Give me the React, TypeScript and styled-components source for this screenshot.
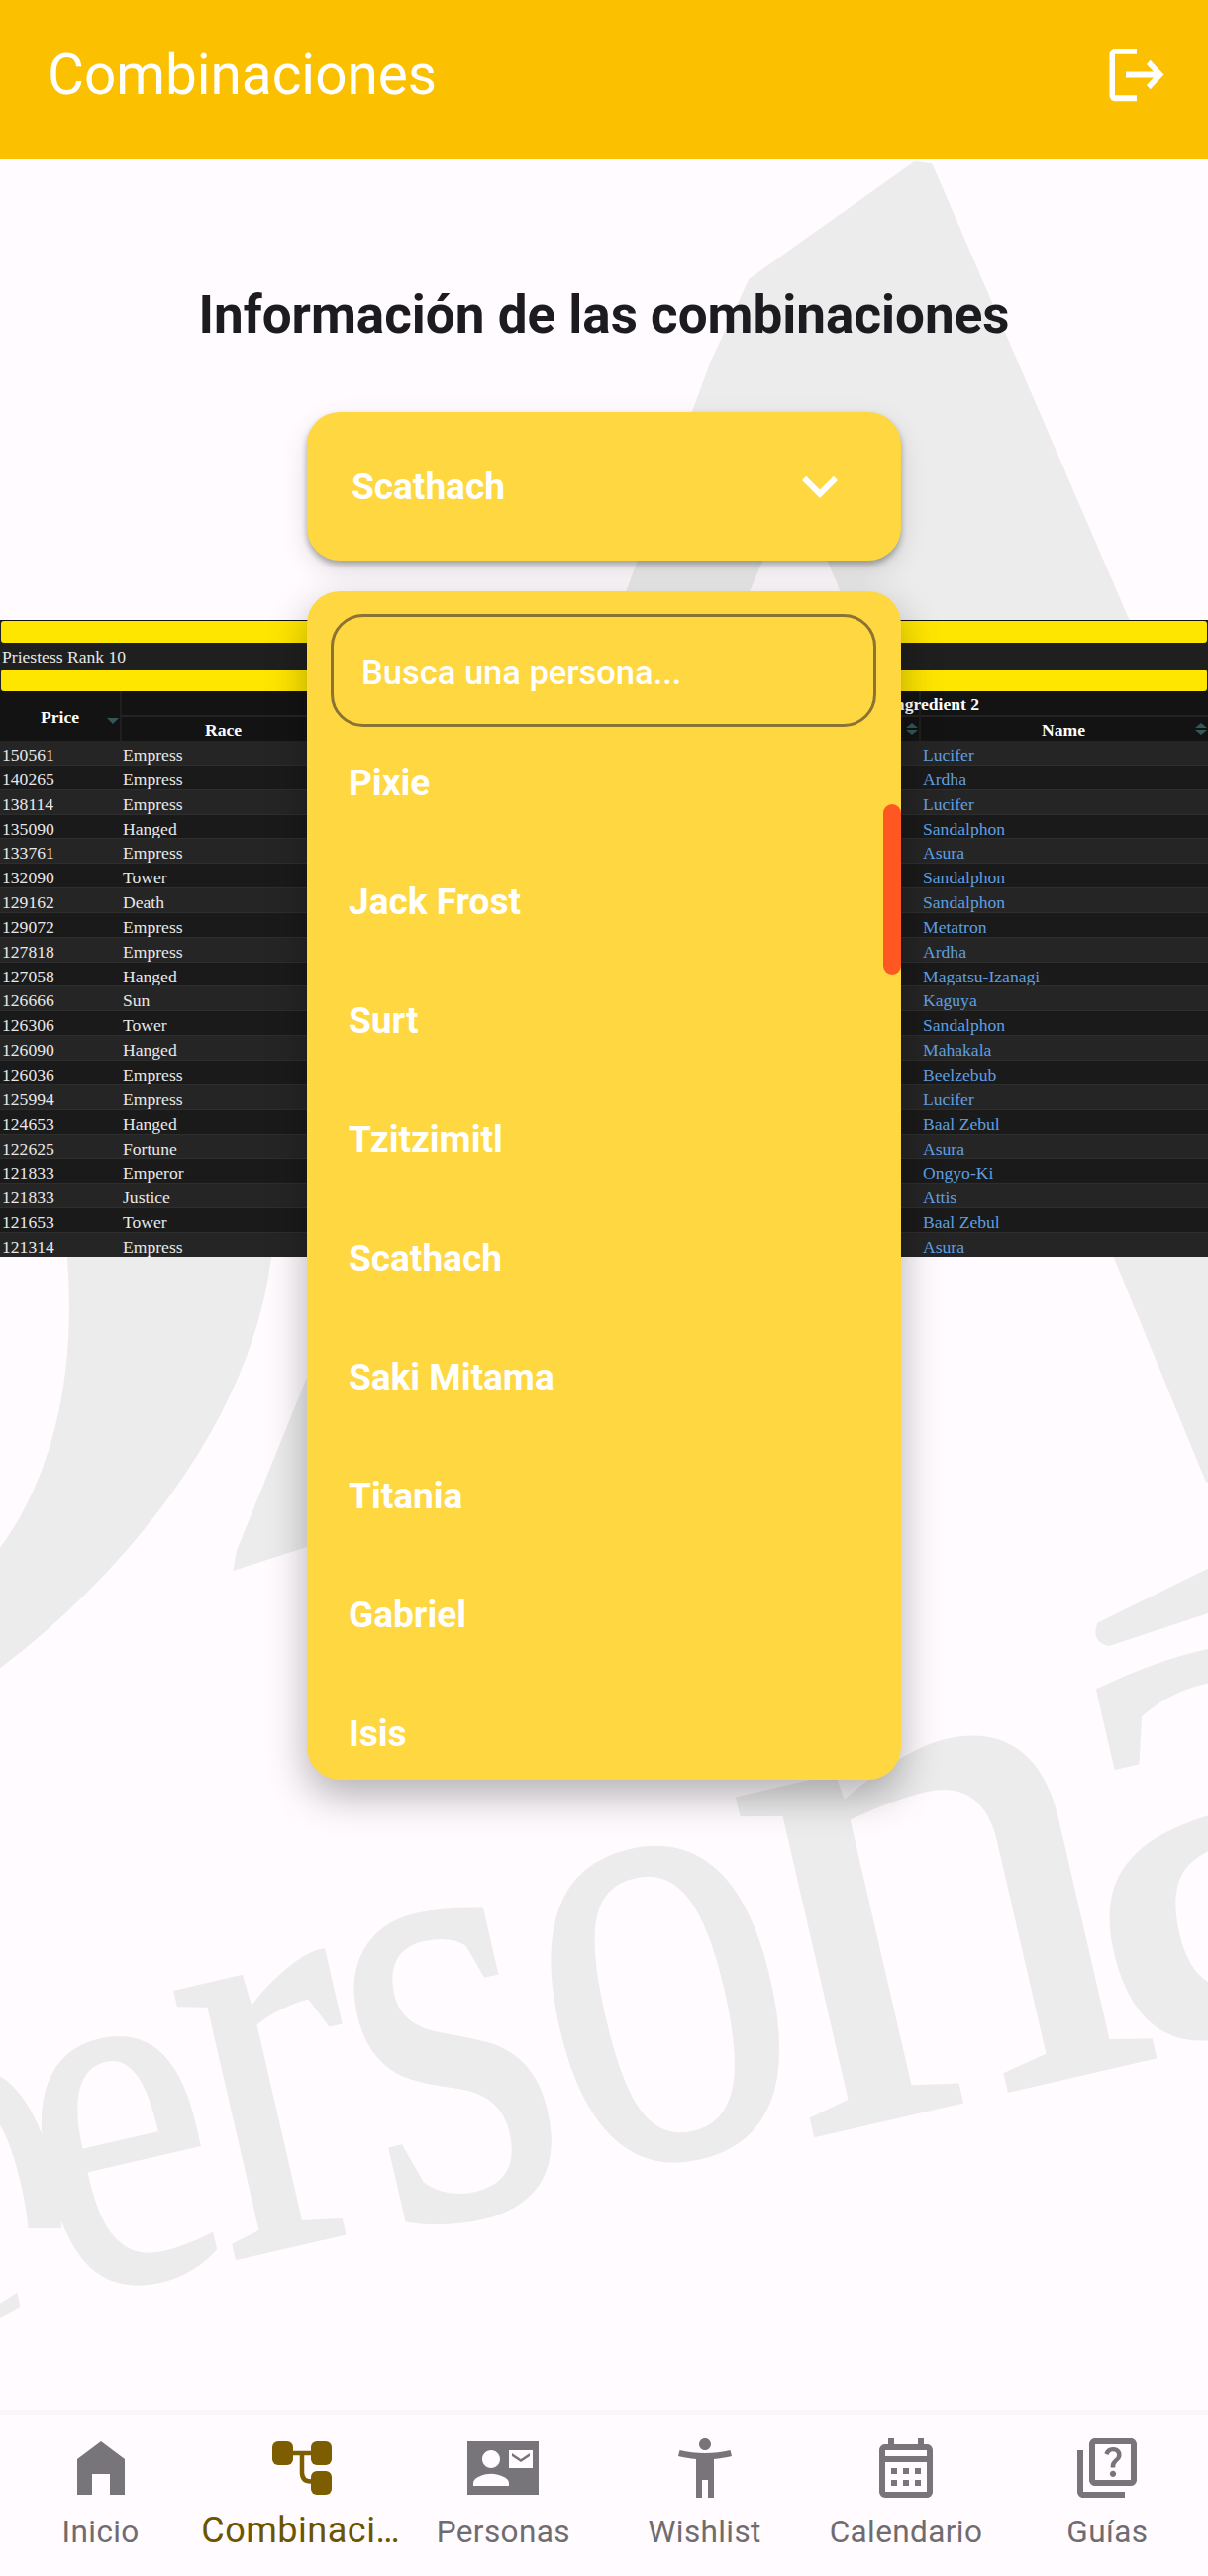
import React from "react";
import styled, { createGlobalStyle } from "styled-components";
import { MdHomeFilled, MdAccessibilityNew, MdOutlineCalendarMonth, MdOutlineQuiz, MdLogout, MdKeyboardArrowDown } from "react-icons/md";

const Global = createGlobalStyle`
  html, body { margin: 0; padding: 0; background: #fffbfe; }
  * { box-sizing: border-box; }
`;

const Screen = styled.div`
  position: relative;
  width: 1220px;
  height: 2601px;
  overflow: hidden;
  background: #fffbfe;
  font-family: Roboto, "Noto Sans", sans-serif;
  display: flex;
  flex-direction: column;
`;

const Watermark = styled.svg`
  position: absolute;
  inset: 0;
  width: 1220px;
  height: 2601px;
`;

const AppBar = styled.header`
  position: relative;
  height: 161px;
  flex: none;
  background: #fbc000;
  color: #fff;
  display: flex;
  align-items: center;
  justify-content: space-between;
  padding: 0 39px 10px 48px;
`;
const AppTitle = styled.h1`
  margin: 0;
  font-size: 56.7px;
  font-weight: 400;
`;
const LogoutIcon = styled(MdLogout)`
  width: 66px;
  height: 71px;
  color: #fff;
`;

const Body = styled.main`
  position: relative;
  flex: 1;
  min-height: 0;
`;

const Heading = styled.h2`
  margin: 0;
  padding-top: 127px;
  height: 255px;
  line-height: 60px;
  font-size: 53px;
  font-weight: 700;
  text-align: center;
  color: #1c1b1f;
`;

const Trigger = styled.div`
  position: relative;
  margin-left: 310px;
  width: 600px;
  height: 150px;
  border-radius: 33px;
  background: #ffd740;
  box-shadow: 0 4px 6px rgba(0,0,0,.3), 0 10px 28px rgba(0,0,0,.12);
  color: #fff;
  display: flex;
  align-items: center;
  justify-content: space-between;
  padding: 0 46px 0 45px;
  font-size: 37px;
  font-weight: 700;
`;
const Chevron = styled(MdKeyboardArrowDown)`
  width: 72px;
  height: 72px;
  color: #fff;
`;

const ScreenshotTable = styled.div`
  position: absolute;
  left: 0;
  top: 465px;
  width: 1220px;
  height: 643px;
  overflow: hidden;
  background: #1f1f1f;
  font-family: "Liberation Serif", serif;
  font-size: 17.6px;
  color: #e8e8e8;
  border-top: 1px solid #111;
`;
const YellowBar = styled.div`
  height: 22px;
  margin: 0 1px;
  border-radius: 3px;
  background: #ffe600;
`;
const RankRow = styled.div`
  height: 27px;
  line-height: 29px;
  padding-left: 2px;
  background: #1f1f1f;
`;
const HeadRow = styled.div`
  display: grid;
  grid-template-columns: 121px 1fr 290px;
  gap: 2px;
  height: 50px;
  background: #1f1f1f;
  color: #fff;
  font-weight: 700;
`;
const HeadCell = styled.div`
  position: relative;
  display: flex;
  flex-direction: column;
  background: #131313;
`;
const PriceHead = styled(HeadCell)`
  justify-content: center;
  align-items: center;
  padding-top: 2px;
`;
const HeadTop = styled.div`
  height: 26px;
  line-height: 27px;
  border-bottom: 2px solid #242424;
  white-space: nowrap;
`;
const GroupTitle = styled.span`
  margin-left: -33px;
`;
const HeadBottom = styled.div<{ $pad: number }>`
  height: 24px;
  line-height: 26px;
  padding-left: ${p => p.$pad}px;
`;
const SortDown = styled.span`
  position: absolute;
  right: 1px;
  top: 27px;
  width: 0;
  height: 0;
  border-left: 6px solid transparent;
  border-right: 6px solid transparent;
  border-top: 6px solid #33585a;
`;
const SortBoth = styled.span`
  position: absolute;
  right: 1px;
  top: 32px;
  width: 12px;
  height: 12px;
  &::before, &::after {
    content: "";
    position: absolute;
    left: 0;
    width: 0;
    height: 0;
    border-left: 6px solid transparent;
    border-right: 6px solid transparent;
  }
  &::before { top: 0; border-bottom: 5px solid #33585a; }
  &::after { bottom: 0; border-top: 5px solid #33585a; }
`;
const DataRow = styled.div<{ $odd: boolean }>`
  display: grid;
  grid-template-columns: 121px 1fr 290px;
  gap: 2px;
  height: 24.85px;
  line-height: 28px;
  background: ${p => (p.$odd ? "#1a1a1a" : "#252525")};
  border-bottom: 1px solid #2e2e2e;
  white-space: nowrap;
`;
const Cell = styled.div`
  padding-left: 2px;
  overflow: hidden;
`;
const RaceCell = styled(Cell)`
  padding-left: 1px;
`;
const LinkCell = styled(Cell)`
  color: #5f9fe0;
  padding-left: 2px;
`;

const Menu = styled.div`
  position: absolute;
  left: 310px;
  top: 436px;
  width: 600px;
  height: 1200px;
  border-radius: 33px;
  background: #ffd740;
  box-shadow: 0 16px 40px rgba(0,0,0,.3);
  overflow: hidden;
  padding: 23px 25px 0 24px;
`;
const Search = styled.div`
  height: 114px;
  border: 3px solid #8a7333;
  border-radius: 33px;
  padding: 3px 0 0 28px;
  display: flex;
  align-items: center;
  color: #fff;
  font-size: 34.5px;
  font-weight: 500;
`;
const Options = styled.div`
  margin-top: -4px;
  color: #fff;
  font-size: 37px;
  font-weight: 700;
`;
const Option = styled.div`
  height: 120px;
  display: flex;
  align-items: center;
  padding: 0 0 0 18px;
`;
const Thumb = styled.div`
  position: absolute;
  right: 0;
  top: 215px;
  width: 18px;
  height: 172px;
  border-radius: 9px;
  background: #ff5722;
`;

const BottomNav = styled.nav`
  position: relative;
  flex: none;
  height: 168px;
  display: grid;
  grid-template-columns: repeat(6, 1fr);
  background: #fffbfe;
  border-top: 5px solid #f8f6f8;
`;
const NavItem = styled.div<{ $active?: boolean }>`
  display: flex;
  flex-direction: column;
  align-items: center;
  padding-top: 18px;
  min-width: 0;
  color: ${p => (p.$active ? "#7c5e00" : "#77747a")};
`;
const NavIcon = styled.div`
  width: 72px;
  height: 72px;
  flex: none;
  svg { display: block; width: 72px; height: 72px; }
`;
const NavLabel = styled.div<{ $active?: boolean }>`
  width: 100%;
  margin-top: ${p => (p.$active ? 5 : 10)}px;
  text-align: center;
  font-size: ${p => (p.$active ? 36 : 31.5)}px;
  line-height: ${p => (p.$active ? 44 : 38)}px;
  letter-spacing: ${p => (p.$active ? 0.5 : 0.4)}px;
  color: ${p => (p.$active ? "#6c5400" : "#6f6c70")};
  white-space: nowrap;
  overflow: hidden;
  text-overflow: ellipsis;
`;

const rows: [string, string, string][] = [
  ["150561", "Empress", "Lucifer"],
  ["140265", "Empress", "Ardha"],
  ["138114", "Empress", "Lucifer"],
  ["135090", "Hanged", "Sandalphon"],
  ["133761", "Empress", "Asura"],
  ["132090", "Tower", "Sandalphon"],
  ["129162", "Death", "Sandalphon"],
  ["129072", "Empress", "Metatron"],
  ["127818", "Empress", "Ardha"],
  ["127058", "Hanged", "Magatsu-Izanagi"],
  ["126666", "Sun", "Kaguya"],
  ["126306", "Tower", "Sandalphon"],
  ["126090", "Hanged", "Mahakala"],
  ["126036", "Empress", "Beelzebub"],
  ["125994", "Empress", "Lucifer"],
  ["124653", "Hanged", "Baal Zebul"],
  ["122625", "Fortune", "Asura"],
  ["121833", "Emperor", "Ongyo-Ki"],
  ["121833", "Justice", "Attis"],
  ["121653", "Tower", "Baal Zebul"],
  ["121314", "Empress", "Asura"],
];

const options = ["Pixie", "Jack Frost", "Surt", "Tzitzimitl", "Scathach", "Saki Mitama", "Titania", "Gabriel", "Isis"];

const letters = [
  { ch: "e", x: 152, y: 2300, size: 520, sx: 0.8 },
  { ch: "r", x: 312, y: 2263, size: 600, sx: 0.85 },
  { ch: "s", x: 490, y: 2232, size: 650, sx: 0.8 },
  { ch: "o", x: 706, y: 2172, size: 660, sx: 0.77 },
  { ch: "n", x: 992, y: 2117, size: 760, sx: 1 },
  { ch: "a", x: 1295, y: 2035, size: 800, sx: 1 },
];

const TreeIcon = () => (
  <svg viewBox="0 0 24 24" fill="currentColor">
    <rect x="2" y="3" width="7" height="8" rx="2" />
    <rect x="15" y="3" width="7" height="8" rx="2" />
    <rect x="15" y="13" width="7" height="8" rx="2" />
    <path d="M9 7h6M12 7v6.5c0 2 1 3 3 3" fill="none" stroke="currentColor" strokeWidth="1.5" />
  </svg>
);

const ContactIcon = () => (
  <svg viewBox="0 0 24 24" fill="currentColor">
    <path
      fillRule="evenodd"
      d="M0 3h24v18H0z M8 6c1.66 0 3 1.34 3 3s-1.34 3-3 3-3-1.34-3-3 1.34-3 3-3z M14 18H2v-1c0-2 4-3.1 6-3.1s6 1.1 6 3.1v1z M22 12h-8V6h8z"
    />
    <path d="M21 8V7l-3 2-3-2v1l3 2 3-2z" />
  </svg>
);

const nav = [
  { label: "Inicio", icon: <MdHomeFilled /> },
  { label: "Combinaciones", icon: <TreeIcon />, active: true },
  { label: "Personas", icon: <ContactIcon /> },
  { label: "Wishlist", icon: <MdAccessibilityNew /> },
  { label: "Calendario", icon: <MdOutlineCalendarMonth /> },
  { label: "Guías", icon: <MdOutlineQuiz /> },
];

export default function App() {
  return (
    <Screen>
      <Global />
      <Watermark viewBox="0 0 1220 2601">
        <defs>
          <clipPath id="p-clip">
            <rect x="0" y="1900" width="200" height="350" />
          </clipPath>
        </defs>
        <g fill="#ebeceb" stroke="#ebeceb" strokeWidth="4">
          <path d="M924 165 L940 167 L1220 815 L1220 1496 L849 593 L803 483 L758 590 L340 1550 L238 1583 L241 1566 L636 593 L719 367 L758 283 Z" />
          <path d="M272 1270 C250 1440 120 1590 0 1682 L0 1566 C50 1500 80 1400 70 1270 Z" />
          <path d="M1110 1640 L1220 1586 L1220 1627 L1120 1660 Q1104 1656 1110 1640 Z" />
          <path d="M0 2328 L16 2318 L18 2328 L0 2338 Z" />
          <g clipPath="url(#p-clip)">
            <text
              transform="translate(6 2333) rotate(-13) scale(.7 1)"
              textAnchor="middle"
              fontFamily="'Liberation Serif', serif"
              fontSize={520}
            >
              p
            </text>
          </g>
          {letters.map(l => (
            <text
              key={l.ch}
              transform={`translate(${l.x} ${l.y}) rotate(-13) scale(${l.sx} 1)`}
              textAnchor="middle"
              fontFamily="'Liberation Serif', serif"
              fontSize={l.size}
            >
              {l.ch}
            </text>
          ))}
        </g>
      </Watermark>
      <AppBar>
        <AppTitle>Combinaciones</AppTitle>
        <LogoutIcon preserveAspectRatio="none" />
      </AppBar>
      <Body>
        <Heading>Información de las combinaciones</Heading>
        <Trigger>
          Scathach
          <Chevron />
        </Trigger>
        <ScreenshotTable>
          <YellowBar />
          <RankRow>Priestess Rank 10</RankRow>
          <YellowBar />
          <HeadRow>
            <PriceHead>
              Price
              <SortDown />
            </PriceHead>
            <HeadCell>
              <HeadTop />
              <HeadBottom $pad={84}>Race</HeadBottom>
              <SortBoth />
            </HeadCell>
            <HeadCell>
              <HeadTop>
                <GroupTitle>Ingredient 2</GroupTitle>
              </HeadTop>
              <HeadBottom $pad={122}>Name</HeadBottom>
              <SortBoth />
            </HeadCell>
          </HeadRow>
          {rows.map((r, i) => (
            <DataRow key={i} $odd={i % 2 === 1}>
              <Cell>{r[0]}</Cell>
              <RaceCell>{r[1]}</RaceCell>
              <LinkCell>{r[2]}</LinkCell>
            </DataRow>
          ))}
        </ScreenshotTable>
        <Menu>
          <Search>Busca una persona...</Search>
          <Options>
            {options.map(o => (
              <Option key={o}>{o}</Option>
            ))}
          </Options>
          <Thumb />
        </Menu>
      </Body>
      <BottomNav>
        {nav.map(n => (
          <NavItem key={n.label} $active={n.active}>
            <NavIcon>{n.icon}</NavIcon>
            <NavLabel $active={n.active}>{n.label}</NavLabel>
          </NavItem>
        ))}
      </BottomNav>
    </Screen>
  );
}
